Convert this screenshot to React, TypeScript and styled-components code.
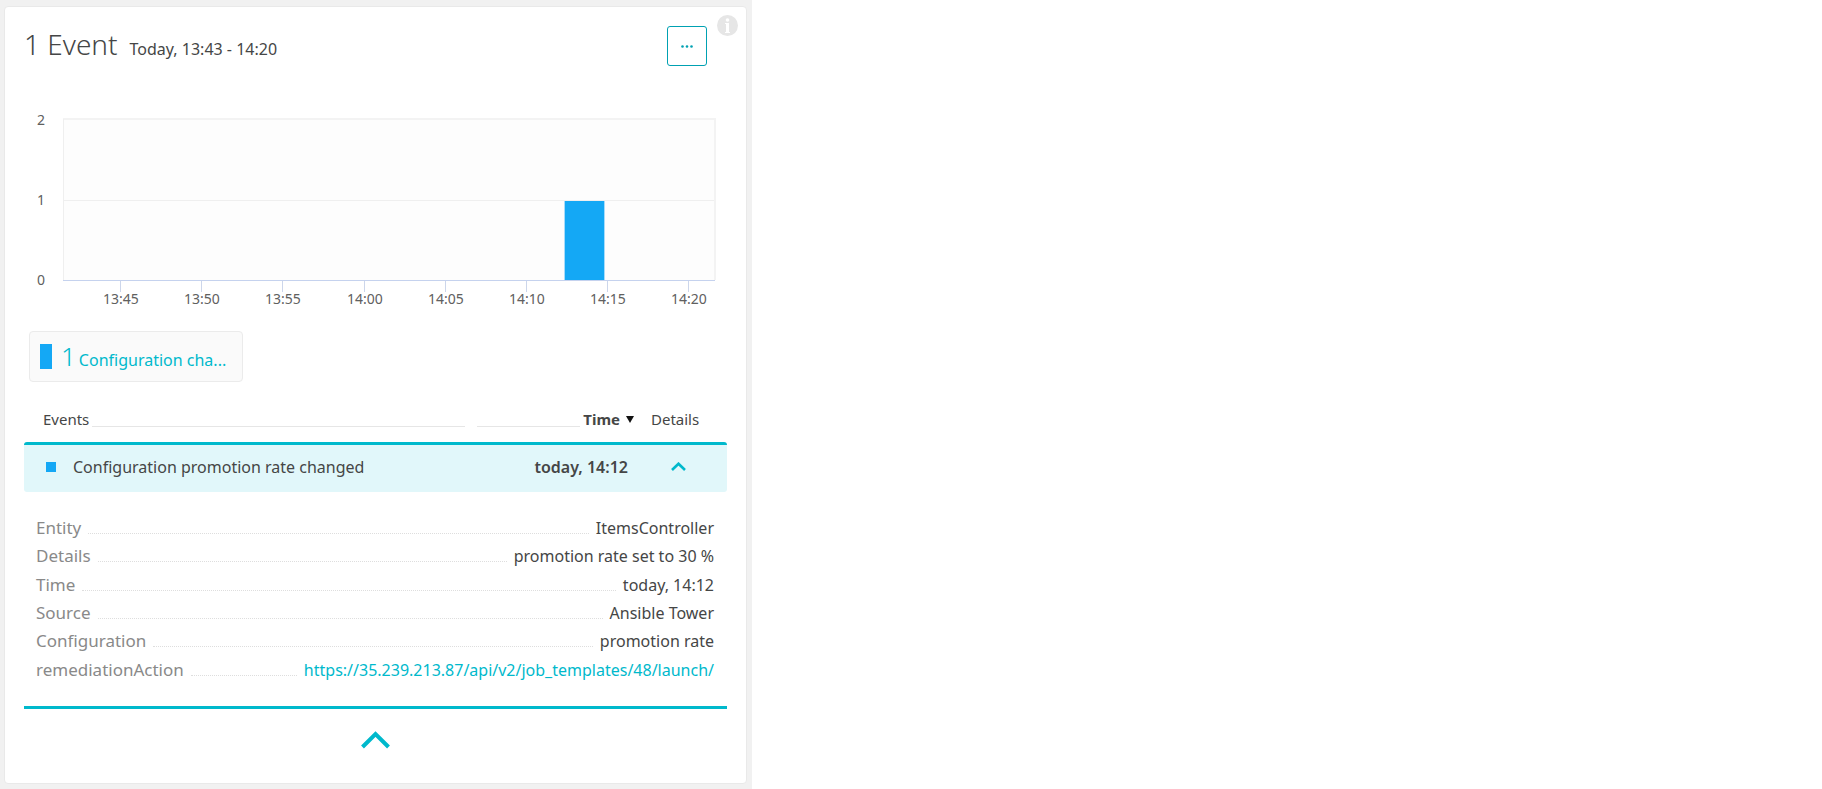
import React from 'react';
import styled, { createGlobalStyle } from 'styled-components';

const TEAL = '#00b9cc';
const BLUE = '#14a8f5';
const TEXT = '#454646';

const GlobalStyle = createGlobalStyle`
  *, *::before, *::after { box-sizing: border-box; }
  body {
    margin: 0;
    background: #ffffff;
    color: ${TEXT};
    font-family: "Noto Sans", "Open Sans", sans-serif;
    font-size: 16px;
    line-height: 28px;
  }
  button { font: inherit; padding: 0; background: none; border: 0; cursor: pointer; }
`;

const Panel = styled.main`
  display: flex;
  flex-direction: column;
  max-width: 752px;
  min-height: 100vh;
  padding: 6px 5px 5px 4px;
  background: #f1f1f1;
`;

const Card = styled.section`
  position: relative;
  flex: 1;
  padding: 19px 19px 32px;
  background: #ffffff;
  border: 1px solid #e9e9e9;
  border-radius: 4px;
`;

const Header = styled.header`
  display: flex;
  align-items: flex-start;
  justify-content: space-between;
  height: 76px;
  padding-right: 20px;
`;

const Heading = styled.div`
  display: flex;
  align-items: baseline;
  gap: 12px;
`;

const Title = styled.h1`
  margin: 0;
  font-size: 28px;
  font-weight: 300;
  line-height: 36px;
`;

const MoreButton = styled.button`
  display: grid;
  place-items: center;
  width: 40px;
  height: 40px;
  border: 1px solid #00a1b2;
  border-radius: 3px;
`;

const InfoButton = styled.button`
  position: absolute;
  top: 8px;
  right: 8px;
  width: 21px;
  height: 21px;

  svg { display: block; }
`;

const ChartSvg = styled.svg`
  display: block;
  width: 100%;
  height: auto;

  text {
    fill: #606060;
    font-size: 14px;
    text-anchor: middle;
  }
`;

const LegendButton = styled.button`
  display: flex;
  align-items: center;
  gap: 9px;
  height: 51px;
  margin: 16px 0 24px 5px;
  padding: 0 16px 0 10px;
  color: ${TEAL};
  background: #fafafa;
  border: 1px solid #ebebeb;
  border-radius: 4px;
`;

const LegendSwatch = styled.span`
  width: 12px;
  height: 25px;
  background: ${BLUE};
`;

const LegendLabel = styled.span`
  display: flex;
  align-items: baseline;
  gap: 3px;
`;

const LegendCount = styled.span`
  font-size: 26px;
  font-weight: 300;
  line-height: 32px;
`;

const EventsTable = styled.table`
  width: 100%;
  table-layout: fixed;
  border-spacing: 0;
  text-align: left;
`;

const HeadCell = styled.th<{ $left?: number; $right?: number }>`
  height: 36px;
  padding: 0 ${(p) => p.$right ?? 0}px 10px ${(p) => p.$left ?? 0}px;
  font-size: 15px;
  font-weight: 400;
  line-height: 18px;
`;

const HeadLine = styled.span`
  display: flex;
  align-items: stretch;
  gap: 3px;
`;

const Rule = styled.span`
  flex: 1;
  height: 17px;
  border-bottom: 1px solid #e6e6e6;
`;

const SortButton = styled.button`
  display: flex;
  align-items: center;
  gap: 6px;
  height: 18px;
  color: ${TEXT};
  font-weight: 700;
`;

const EventCell = styled.td`
  height: 50px;
  padding: 0 0 4px;
  background: #e1f7fa;
  border-top: 3px solid ${TEAL};

  &:first-child { padding-left: 22px; border-radius: 3px 0 0 3px; }
  &:last-child { border-radius: 0 3px 3px 0; }
`;

const EventName = styled.span`
  display: flex;
  align-items: center;
  gap: 17px;
  white-space: nowrap;
`;

const EventSwatch = styled.span`
  width: 10px;
  height: 10px;
  background: ${BLUE};
`;

const EventTime = styled(EventCell)`
  padding-right: 13px;
  text-align: right;
  font-weight: 600;
  white-space: nowrap;
`;

const RowToggle = styled.button`
  display: block;
  height: 28px;
  margin-left: 30px;

  svg { display: block; }
`;

const DetailsCell = styled.td`
  padding: 22px 13px 22px 12px;
  border-bottom: 3px solid ${TEAL};
`;

const DetailList = styled.dl`
  display: grid;
  grid-auto-rows: 1fr;
  min-height: 170px;
  margin: 0;
`;

const DetailRow = styled.div`
  display: flex;
  gap: 7px;
`;

const DetailTerm = styled.dt`
  color: #898989;
  font-size: 17px;
`;

const Leader = styled.span`
  flex: 1;
  height: 20px;
  border-bottom: 1px dotted #dedede;
`;

const DetailValue = styled.dd`
  margin: 0;
`;

const DetailLink = styled.a`
  color: ${TEAL};
  text-decoration: none;
`;

const CollapseButton = styled.button`
  display: block;
  margin: 22px auto 0;

  svg { display: block; }
`;

const TICKS = ['13:45', '13:50', '13:55', '14:00', '14:05', '14:10', '14:15', '14:20'];

const DETAILS = [
  { term: 'Entity', value: 'ItemsController' },
  { term: 'Details', value: 'promotion rate set to 30 %' },
  { term: 'Time', value: 'today, 14:12' },
  { term: 'Source', value: 'Ansible Tower' },
  { term: 'Configuration', value: 'promotion rate' },
  {
    term: 'remediationAction',
    value: 'https://35.239.213.87/api/v2/job_templates/48/launch/',
    link: true,
  },
];

function EventChart() {
  return (
    <ChartSvg viewBox="0 0 703 213" role="img" aria-label="Events over time">
      <rect x="39" y="17" width="652" height="161" fill="#fdfdfd" />
      <path d="M39 17H692" stroke="#f3f3f3" strokeWidth="2" />
      <path d="M39.500 17V178M39 98.500H691" stroke="#efefef" />
      <path d="M691 17V178" stroke="#f3f3f3" strokeWidth="2" />
      <rect x="540" y="99" width="41" height="79" fill="#a6dcfb" />
      <rect x="541" y="99" width="39" height="79" fill={BLUE} />
      <path d="M39 178.500H691" stroke="#c5d2ee" />
      {['2', '1', '0'].map((label, i) => (
        <text key={label} x="17" y={23 + i * 80}>{label}</text>
      ))}
      {TICKS.map((label, i) => {
        const x = 97 + Math.round(i * 81.2);
        return (
          <g key={label}>
            <path d={`M${x - 0.5} 179V190`} stroke="#ccd6eb" />
            <text x={x} y="202">{label}</text>
          </g>
        );
      })}
    </ChartSvg>
  );
}

export default function App() {
  return (
    <>
      <GlobalStyle />
      <Panel>
        <Card>
          <Header>
            <Heading>
              <Title>1 Event</Title>
              <span>Today, 13:43 - 14:20</span>
            </Heading>
            <MoreButton type="button" aria-label="More actions">
              <svg width="12" height="3" viewBox="0 0 12 3" fill="#00a1b2">
                <circle cx="1.500" cy="1.500" r="1.300" />
                <circle cx="6" cy="1.500" r="1.300" />
                <circle cx="10.500" cy="1.500" r="1.300" />
              </svg>
            </MoreButton>
          </Header>
          <InfoButton type="button" aria-label="Information">
            <svg width="21" height="21" viewBox="0 0 21 21">
              <circle cx="10.500" cy="10.500" r="10.500" fill="#e6e6e6" />
              <circle cx="10.500" cy="5" r="1.800" fill="#fff" />
              <path d="M8 8h4v9h1v1H8v-1h1V9H8z" fill="#fff" />
            </svg>
          </InfoButton>

          <EventChart />

          <LegendButton type="button">
            <LegendSwatch />
            <LegendLabel>
              <LegendCount>1</LegendCount>
              <span>Configuration cha...</span>
            </LegendLabel>
          </LegendButton>

          <EventsTable>
            <colgroup>
              <col />
              <col width="164" />
              <col width="86" />
            </colgroup>
            <thead>
              <tr>
                <HeadCell scope="col" $left={19} $right={12}>
                  <HeadLine>
                    Events
                    <Rule />
                  </HeadLine>
                </HeadCell>
                <HeadCell scope="col" $right={7} aria-sort="descending">
                  <HeadLine>
                    <Rule />
                    <SortButton type="button">
                      Time
                      <svg width="8" height="7" viewBox="0 0 8 7">
                        <path d="M0 0h8L4 7z" fill="#111" />
                      </svg>
                    </SortButton>
                  </HeadLine>
                </HeadCell>
                <HeadCell scope="col" $left={10}>Details</HeadCell>
              </tr>
            </thead>
            <tbody>
              <tr>
                <EventCell>
                  <EventName>
                    <EventSwatch />
                    Configuration promotion rate changed
                  </EventName>
                </EventCell>
                <EventTime>today, 14:12</EventTime>
                <EventCell>
                  <RowToggle type="button" aria-label="Hide event details" aria-expanded="true">
                    <svg width="15" height="9" viewBox="0 0 15 9">
                      <path d="M1 8L7.500 1.700L14 8" fill="none" stroke={TEAL} strokeWidth="2.600" />
                    </svg>
                  </RowToggle>
                </EventCell>
              </tr>
              <tr>
                <DetailsCell colSpan={3}>
                  <DetailList>
                    {DETAILS.map(({ term, value, link }) => (
                      <DetailRow key={term}>
                        <DetailTerm>{term}</DetailTerm>
                        <Leader />
                        <DetailValue>
                          {link ? <DetailLink href={value}>{value}</DetailLink> : value}
                        </DetailValue>
                      </DetailRow>
                    ))}
                  </DetailList>
                </DetailsCell>
              </tr>
            </tbody>
          </EventsTable>

          <CollapseButton type="button" aria-label="Collapse">
            <svg width="29" height="18" viewBox="0 0 29 18">
              <path d="M1.500 16L14.500 3L27.500 16" fill="none" stroke={TEAL} strokeWidth="4" />
            </svg>
          </CollapseButton>
        </Card>
      </Panel>
    </>
  );
}
